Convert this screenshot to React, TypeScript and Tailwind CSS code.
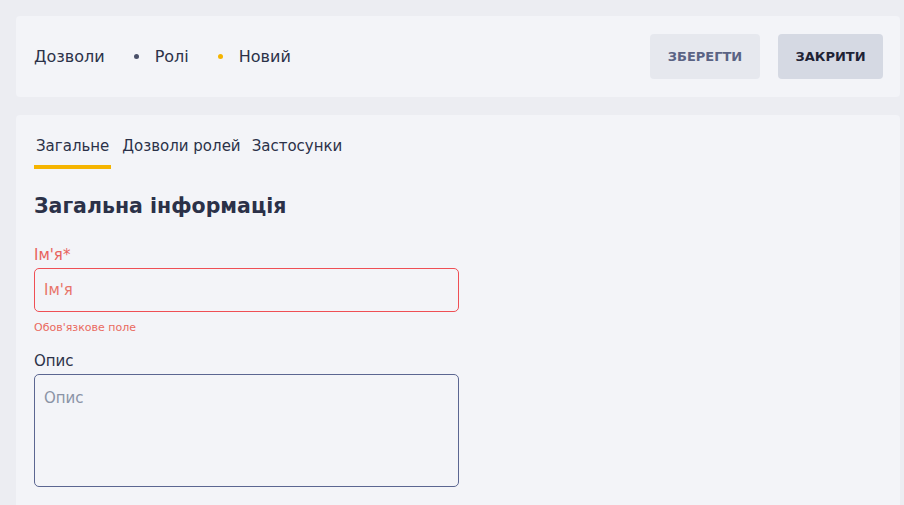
import React from "react";

export default function App() {
  const font = { fontFamily: '"DejaVu Sans", sans-serif' };
  return (
    <div className="min-h-[505px] w-[904px] bg-[#ecedf2] pl-4 pr-1 pt-4 text-[#2b3148]" style={font}>
      <div className="flex h-[81px] items-center justify-between rounded-[4px] bg-[#f3f4f8] pl-[18px] pr-[17px]">
        <div className="flex items-center text-[16px] text-[#2b3148]">
          <span>Дозволи</span>
          <span className="ml-[29px] mr-[16px] h-[5px] w-[5px] rounded-full bg-[#4a5069]" />
          <span>Ролі</span>
          <span className="ml-[29px] mr-[16px] h-[5px] w-[5px] rounded-full bg-[#f5b400]" />
          <span>Новий</span>
        </div>
        <div className="flex items-center gap-[18px]">
          <button className="h-[45px] w-[110px] rounded-[4px] bg-[#e6e8ee] text-[13px] font-semibold text-[#5a6384]">ЗБЕРЕГТИ</button>
          <button className="h-[45px] w-[105px] rounded-[4px] bg-[#d5d9e3] text-[13px] font-semibold text-[#1f2335]">ЗАКРИТИ</button>
        </div>
      </div>
      <div className="mt-[18px] h-[390px] rounded-t-[4px] bg-[#f3f4f8] pl-[18px] pt-[20px]">
        <div className="flex items-end gap-[11px] text-[15px] text-[#2b3148]">
          <div className="flex flex-col">
            <span className="px-[2px] leading-[22px]">Загальне</span>
            <span className="mt-[8px] h-[4px] bg-[#f5b400]" />
          </div>
          <span className="mb-[12px] leading-[22px]">Дозволи ролей</span>
          <span className="mb-[12px] leading-[22px]">Застосунки</span>
        </div>
        <h2 className="mt-[22px] text-[20.5px] font-bold leading-[30px] text-[#2b3148]">Загальна інформація</h2>
        <div className="mt-[23px] w-[425px]">
          <label className="block text-[15px] leading-[22px] text-[#e8625e]">Ім'я*</label>
          <div className="mt-[2px] flex h-[44px] items-center rounded-[5px] border border-[#ef4f55] px-[9px] text-[15px] text-[#e8746a]">Ім'я</div>
          <div className="mt-[8px] text-[11px] text-[#ea6a5f]">Обов'язкове поле</div>
          <label className="mt-[13px] block text-[15px] leading-[22px] text-[#2b3148]">Опис</label>
          <div className="mt-[2px] h-[113px] rounded-[5px] border border-[#5b6691] px-[9px] pt-[12px] text-[15px] text-[#8a93a6]">Опис</div>
        </div>
      </div>
    </div>
  );
}
